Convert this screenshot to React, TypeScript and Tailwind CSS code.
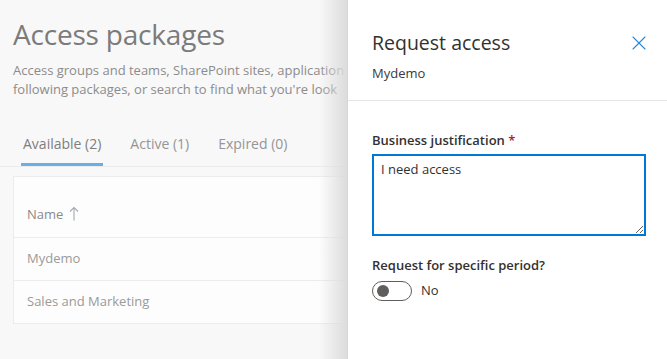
import { X } from 'lucide-react'

function App() {
  return (
    <main
      className="flex h-[359px] w-[667px] overflow-hidden bg-[#f8f8f8]"
      style={{ fontFamily: '"Open Sans", "Noto Sans", sans-serif' }}
    >
      {/* Page behind the panel */}
      <section className="relative w-[347px] shrink-0 overflow-hidden">
        <div className="pl-[13px] pt-[16px]">
          <h1 className="text-[28px] leading-[36px] font-normal text-[#7b7b7b] tracking-[-0.2px] whitespace-nowrap">
            Access packages
          </h1>
          <p className="mt-[9px] text-[13px] leading-[19px] text-[#8c8c8c] whitespace-nowrap">
            Access groups and teams, SharePoint sites, application
            <br />
            following packages, or search to find what you're look
          </p>
        </div>

        <div className="mt-[35px] flex items-end gap-[27px] border-b border-[#ebebeb] pl-[21px] text-[14px] leading-[20px] text-[#959595]">
          <div className="border-b-[3px] border-[#6aaee3] px-[2px] pb-[9px] text-[#7e7e7e] whitespace-nowrap">
            Available (2)
          </div>
          <div className="pb-[12px] whitespace-nowrap">Active (1)</div>
          <div className="pb-[12px] pl-[2px] whitespace-nowrap">Expired (0)</div>
        </div>

        <div className="ml-[13px] mt-[9px] border border-r-0 border-[#ececec] bg-[#fdfdfd] text-[13px]">
          <div className="flex h-[60px] items-end pb-[13px] pl-[13px] text-[#8a8a8a]">
            Name
            <svg className="mb-[3px] ml-[6px]" width="10" height="15" viewBox="0 0 10 15" fill="none">
              <path d="M5 1.5V14.5M1 5.5L5 1.5L9 5.5" stroke="#a3aab0" strokeWidth="1.1" />
            </svg>
          </div>
          <div className="flex h-[43px] items-center border-t border-[#ececec] pl-[13px] text-[#9a9a9a]">
            Mydemo
          </div>
          <div className="flex h-[43px] items-center border-t border-[#ececec] pl-[13px] text-[#9a9a9a]">
            Sales and Marketing
          </div>
        </div>

        <div className="pointer-events-none absolute inset-y-0 right-0 w-[28px] bg-gradient-to-r from-transparent to-[#dcdcdc]" />
      </section>

      {/* Request panel */}
      <aside className="w-[320px] shrink-0 border-l border-[#d6d6d6] bg-white">
        <div className="border-b border-[#e6e6e6] pb-[18px] pl-[24px] pr-[16px] pt-[29px]">
          <div className="flex items-center justify-between">
            <h2 className="text-[19.5px] leading-[28px] text-[#323130]">Request access</h2>
            <X className="h-[24px] w-[24px] text-[#2b88d8]" strokeWidth={1.1} />
          </div>
          <div className="mt-[7px] text-[13px] leading-[18px] text-[#3b3a39]">Mydemo</div>
        </div>

        <div className="pl-[24px] pr-[21px] pt-[30px]">
          <label className="block text-[13px] font-semibold leading-[18px] text-[#323130]">
            Business justification <span className="text-[#a4262c]">*</span>
          </label>
          <textarea
            defaultValue="I need access"
            className="mt-[5px] block h-[82px] w-[274px] resize-y rounded-none border-2 border-[#0078d4] px-[7px] py-[4px] text-[13px] leading-[19px] text-[#323130] outline-none"
          />

          <div className="mt-[20px] text-[13px] font-semibold leading-[18px] text-[#323130]">
            Request for specific period?
          </div>
          <div className="mt-[7px] flex items-center gap-[9px]">
            <div className="flex h-[20px] w-[40px] items-center rounded-full border border-[#605e5c] pl-[4px]">
              <div className="h-[12px] w-[12px] rounded-full bg-[#605e5c]" />
            </div>
            <span className="text-[13px] text-[#323130]">No</span>
          </div>
        </div>
      </aside>
    </main>
  )
}

export default App
